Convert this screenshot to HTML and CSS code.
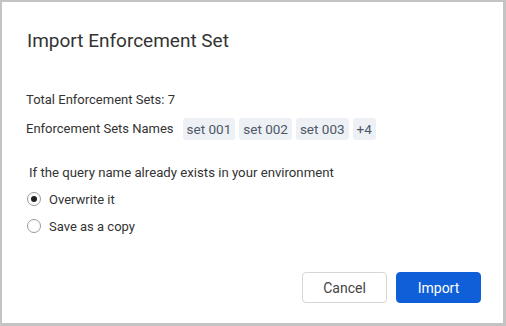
FILE: index.html
```html
<!DOCTYPE html>
<html lang="en">
  <head>
    <meta charset="UTF-8" />
    <title>Import Enforcement Set</title>
    <link rel="stylesheet" href="styles.css">
  </head>
  <body>
    <div class="dialog">
      <div class="dialog-title">Import Enforcement Set</div>

      <div class="dialog-body">
        <div class="info-row">Total Enforcement Sets: 7</div>
        <div class="info-row names-row">
          <span class="names-label">Enforcement Sets Names</span>
          <span class="chip">set 001</span>
          <span class="chip">set 002</span>
          <span class="chip">set 003</span>
          <span class="chip">+4</span>
        </div>

        <div class="question">If the query name already exists in your environment</div>
        <label class="radio-row">
          <span class="radio checked"></span>
          <span>Overwrite it</span>
        </label>
        <label class="radio-row">
          <span class="radio"></span>
          <span>Save as a copy</span>
        </label>
      </div>

      <div class="dialog-footer">
        <button class="btn btn-cancel">Cancel</button>
        <button class="btn btn-primary">Import</button>
      </div>
    </div>
  </body>
</html>
```

FILE: styles.css
```css
html, body {
  margin: 0;
  padding: 0;
  background: #fff;
}

body {
  font-family: Roboto, "Liberation Sans", sans-serif;
  color: #333;
}

.dialog {
  box-sizing: border-box;
  width: 506px;
  height: 326px;
  border-style: solid;
  border-color: #c4c4c4;
  border-width: 2px 3px 3px 2px;
  background: #fff;
  display: flex;
  flex-direction: column;
}

.dialog-title {
  font-size: 19px;
  line-height: 24px;
  color: #333;
  padding: 27px 0 0 25px;
}

.dialog-body {
  padding: 39px 0 0 24px;
  font-size: 13px;
  color: #333;
}

.info-row {
  line-height: 16px;
}

.names-row {
  display: flex;
  align-items: center;
  gap: 4px;
  margin-top: 10px;
}

.names-label {
  margin-right: 5px;
}

.chip {
  background: #edf0f5;
  color: #4d5866;
  border-radius: 3px;
  padding: 0 4px;
  font-size: 13.5px;
  line-height: 22px;
  height: 22px;
}

.question {
  margin-top: 25px;
  margin-left: 3px;
  font-size: 13.2px;
  line-height: 16px;
}

.radio-row {
  display: flex;
  align-items: center;
  gap: 8px;
  height: 16px;
  margin-top: 10px;
  margin-left: 1px;
}

.radio-row + .radio-row {
  margin-top: 11px;
}

.radio {
  box-sizing: border-box;
  width: 14px;
  height: 14px;
  border: 1px solid #9a9a9a;
  border-radius: 50%;
  display: flex;
  align-items: center;
  justify-content: center;
}

.radio.checked::after {
  content: "";
  width: 6px;
  height: 6px;
  border-radius: 50%;
  background: #222;
}

.dialog-footer {
  margin-top: auto;
  display: flex;
  justify-content: flex-end;
  gap: 9px;
  padding: 0 22px 20px 0;
}

.btn {
  box-sizing: border-box;
  width: 85px;
  height: 31px;
  font-family: Roboto, "Liberation Sans", sans-serif;
  font-size: 14px;
  border-radius: 4px;
  cursor: pointer;
}

.btn-cancel {
  background: #fff;
  color: #444;
  border: 1px solid #d6d6d6;
}

.btn-primary {
  background: #0f5fd8;
  color: #fff;
  border: 1px solid #0f5fd8;
}
```
